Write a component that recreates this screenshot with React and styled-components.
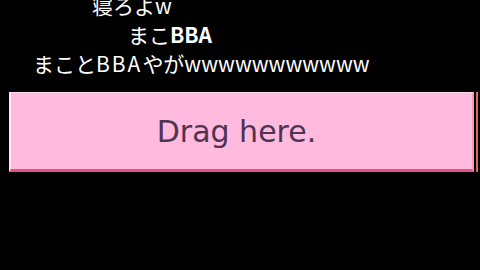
import React from 'react';
import styled, { createGlobalStyle } from 'styled-components';

const Global = createGlobalStyle`
  html, body {
    margin: 0;
    padding: 0;
    background: #000;
    width: 480px;
    height: 270px;
    overflow: hidden;
  }
`

const Screen = styled.div`
  width: 480px;
  height: 270px;
  background: #000;
  display: flex;
  flex-direction: column;
  overflow: hidden;
`

const Comments = styled.div`
  margin-top: -9px;
  display: flex;
  flex-direction: column;
`

const Comment = styled.div`
  padding-left: ${(p) => p.left}px;
  height: 29px;
  line-height: 29px;
  color: #fff;
  font-family: "Noto Sans CJK JP", sans-serif;
  font-size: 21px;
  white-space: nowrap;
`

const Bold = styled.span`
  font-weight: bold;
`

const Wide = styled.span`
  letter-spacing: 2px;
`

const DropRow = styled.div`
  margin-top: 14px;
  padding-left: 9px;
  display: flex;
  gap: 2px;
`

const DropZone = styled.div`
  box-sizing: border-box;
  width: 465px;
  height: 80px;
  background: #ffbadd;
  border-top: 1px solid #ffd6ea;
  border-left: 2px solid #ffe4f2;
  border-right: 2px solid #f49cc6;
  border-bottom: 3px solid #e4508a;
  display: flex;
  align-items: center;
  justify-content: center;
  padding-right: 10px;
  color: #4e3452;
  font-family: "DejaVu Sans", sans-serif;
  font-size: 30px;
`

const EdgeLine = styled.div`
  width: 2px;
  height: 80px;
  background: #e06a48;
`

export default function App() {
  return (
    <Screen>
      <Global />
      <Comments>
        <Comment left={92}>寝ろよw</Comment>
        <Comment left={128}>まこ<Bold>BBA</Bold></Comment>
        <Comment left={33}>まこと<Wide>BBA</Wide>やがwwwwwwwwwww</Comment>
      </Comments>
      <DropRow>
        <DropZone>Drag here.</DropZone>
        <EdgeLine />
      </DropRow>
    </Screen>
  );
}
